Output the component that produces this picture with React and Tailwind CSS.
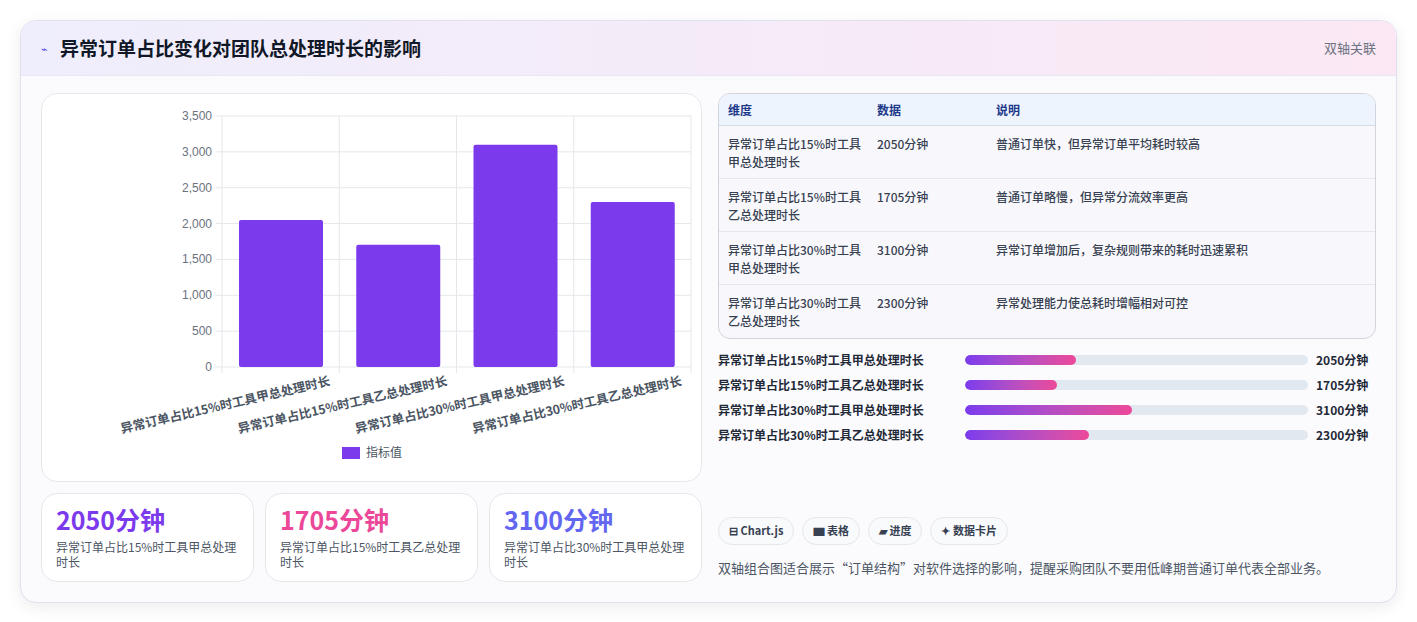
const F = { fontFamily: '"Noto Sans CJK SC","Noto Sans",sans-serif' };
const bars = [
  { l: '异常订单占比15%时工具甲总处理时长', v: 2050 },
  { l: '异常订单占比15%时工具乙总处理时长', v: 1705 },
  { l: '异常订单占比30%时工具甲总处理时长', v: 3100 },
  { l: '异常订单占比30%时工具乙总处理时长', v: 2300 },
];
const rows = [
  ['异常订单占比15%时工具甲总处理时长', '2050分钟', '普通订单快，但异常订单平均耗时较高'],
  ['异常订单占比15%时工具乙总处理时长', '1705分钟', '普通订单略慢，但异常分流效率更高'],
  ['异常订单占比30%时工具甲总处理时长', '3100分钟', '异常订单增加后，复杂规则带来的耗时迅速累积'],
  ['异常订单占比30%时工具乙总处理时长', '2300分钟', '异常处理能力使总耗时增幅相对可控'],
];
function Chart() {
  const x0 = 180, x1 = 649, yTop = 22, yBot = 273;
  const sy = v => yBot - (v / 3500) * (yBot - yTop);
  const cw = (x1 - x0) / 4;
  return (
    <svg width="660" height="386" style={{ fontFamily: '"Liberation Sans",sans-serif' }}>
      {[0, 500, 1000, 1500, 2000, 2500, 3000, 3500].map(t => (
        <g key={t}>
          <line x1={x0 - 6} x2={x1} y1={sy(t)} y2={sy(t)} stroke="#e5e7eb" />
          <text x={x0 - 10} y={sy(t) + 4} textAnchor="end" fontSize="12" fill="#6b7280">{t.toLocaleString('en-US')}</text>
        </g>
      ))}
      {[0, 1, 2, 3, 4].map(i => <line key={i} x1={x0 + i * cw} x2={x0 + i * cw} y1={yTop} y2={yBot + 6} stroke="#e5e7eb" />)}
      {bars.map((b, i) => (
        <rect key={i} x={x0 + i * cw + 17} y={sy(b.v)} width={84} height={yBot - sy(b.v)} fill="#7c3aed" rx="2" />
      ))}
      {bars.map((b, i) => (
        <text key={i} x={x0 + i * cw + cw / 2 + 50} y={yBot + 18} textAnchor="end" fontSize="12.5" fontWeight="600" fill="#4b5563"
          transform={`rotate(-13 ${x0 + i * cw + cw / 2 + 50} ${yBot + 18})`} style={F}>{b.l}</text>
      ))}
      <rect x="300" y="353" width="18" height="12" fill="#7c3aed" />
      <text x="324" y="363" fontSize="12" fill="#4b5563" style={F}>指标值</text>
    </svg>
  );
}
export default function App() {
  return (
    <div className="min-h-[622px] bg-white pt-5 px-5" style={F}>
      <div className="rounded-2xl border border-[#e0e0f0] bg-[#fbfbfe] shadow-[0_4px_16px_rgba(0,0,0,0.08)] overflow-hidden">
        <div className="h-[55px] flex items-center justify-between px-5 bg-gradient-to-r from-[#efeefc] to-[#fbe8f4] border-b border-[#ebe6f5]">
          <div className="flex items-center gap-3">
            <span className="text-[#4f46e5] text-[11px]">⌁</span>
            <span className="text-[19px] font-bold text-[#111827]">异常订单占比变化对团队总处理时长的影响</span>
          </div>
          <span className="text-[13px] text-[#6b7280]">双轴关联</span>
        </div>
        <div className="flex gap-4 p-5 pt-[17px]">
          <div className="w-[661px] flex flex-col gap-[11px]">
            <div className="h-[389px] rounded-2xl border border-[#e5e7eb] bg-white overflow-hidden"><Chart /></div>
            <div className="grid grid-cols-3 gap-[11px]">
              {[['2050分钟', 'text-[#7c3aed]', '异常订单占比15%时工具甲总处理时长'], ['1705分钟', 'text-[#ec4899]', '异常订单占比15%时工具乙总处理时长'], ['3100分钟', 'text-[#6366f1]', '异常订单占比30%时工具甲总处理时长']].map(c => (
                <div key={c[0]} className="h-[89px] rounded-2xl border border-[#e5e7eb] bg-white px-[14px] pt-[10px]">
                  <div className={`text-[25px] font-bold leading-[30px] ${c[1]}`}>{c[0]}</div>
                  <div className="text-[12px] leading-[15px] mt-[5px] text-[#4b5563] w-[185px]">{c[2]}</div>
                </div>
              ))}
            </div>
          </div>
          <div className="flex-1 flex flex-col">
            <div className="rounded-xl border border-[#d1d5db] overflow-hidden bg-[#f8f8fc] text-[12px]">
              <div className="h-[32px] flex items-center bg-[#eef4fd] border-b border-[#d6dbe6] text-[#1e3a8a] font-semibold">
                <div className="w-[158px] pl-[9px]">维度</div><div className="w-[119px]">数据</div><div>说明</div>
              </div>
              {rows.map((r, i) => (
                <div key={i} className={`h-[53px] flex pt-[9px] text-[#374151] font-medium ${i < 3 ? 'border-b border-[#e5e7eb]' : ''}`}>
                  <div className="w-[158px] pl-[9px] pr-3 leading-[18px]">{r[0]}</div>
                  <div className="w-[119px] leading-[18px]">{r[1]}</div>
                  <div className="leading-[18px]">{r[2]}</div>
                </div>
              ))}
            </div>
            <div className="flex flex-col gap-[7px] mt-[12px]">
              {bars.map((b, i) => (
                <div key={i} className="flex items-center h-[18px] text-[12px] font-semibold text-[#1f2937]">
                  <div className="w-[247px]">{b.l}</div>
                  <div className="w-[343px] h-[10px] rounded-full bg-[#e2e8f0] overflow-hidden">
                    <div className="h-full rounded-full bg-gradient-to-r from-[#7c3aed] to-[#ec4899]" style={{ width: `${(b.v / 6350) * 100}%` }} />
                  </div>
                  <div className="ml-2">{b.v}分钟</div>
                </div>
              ))}
            </div>
            <div className="flex gap-2 mt-auto">
              {['⊟ Chart.js', '▆ 表格', '▰ 进度', '✦ 数据卡片'].map(t => (
                <span key={t} className="h-[28px] px-[10px] flex items-center rounded-full border border-[#e5e7eb] bg-[#f8fafc] text-[11px] font-semibold text-[#374151]">{t}</span>
              ))}
            </div>
            <div className="mt-[13px] mb-[5px] text-[13px] text-[#4b5563]">双轴组合图适合展示“订单结构”对软件选择的影响，提醒采购团队不要用低峰期普通订单代表全部业务。</div>
          </div>
        </div>
      </div>
    </div>
  );
}
